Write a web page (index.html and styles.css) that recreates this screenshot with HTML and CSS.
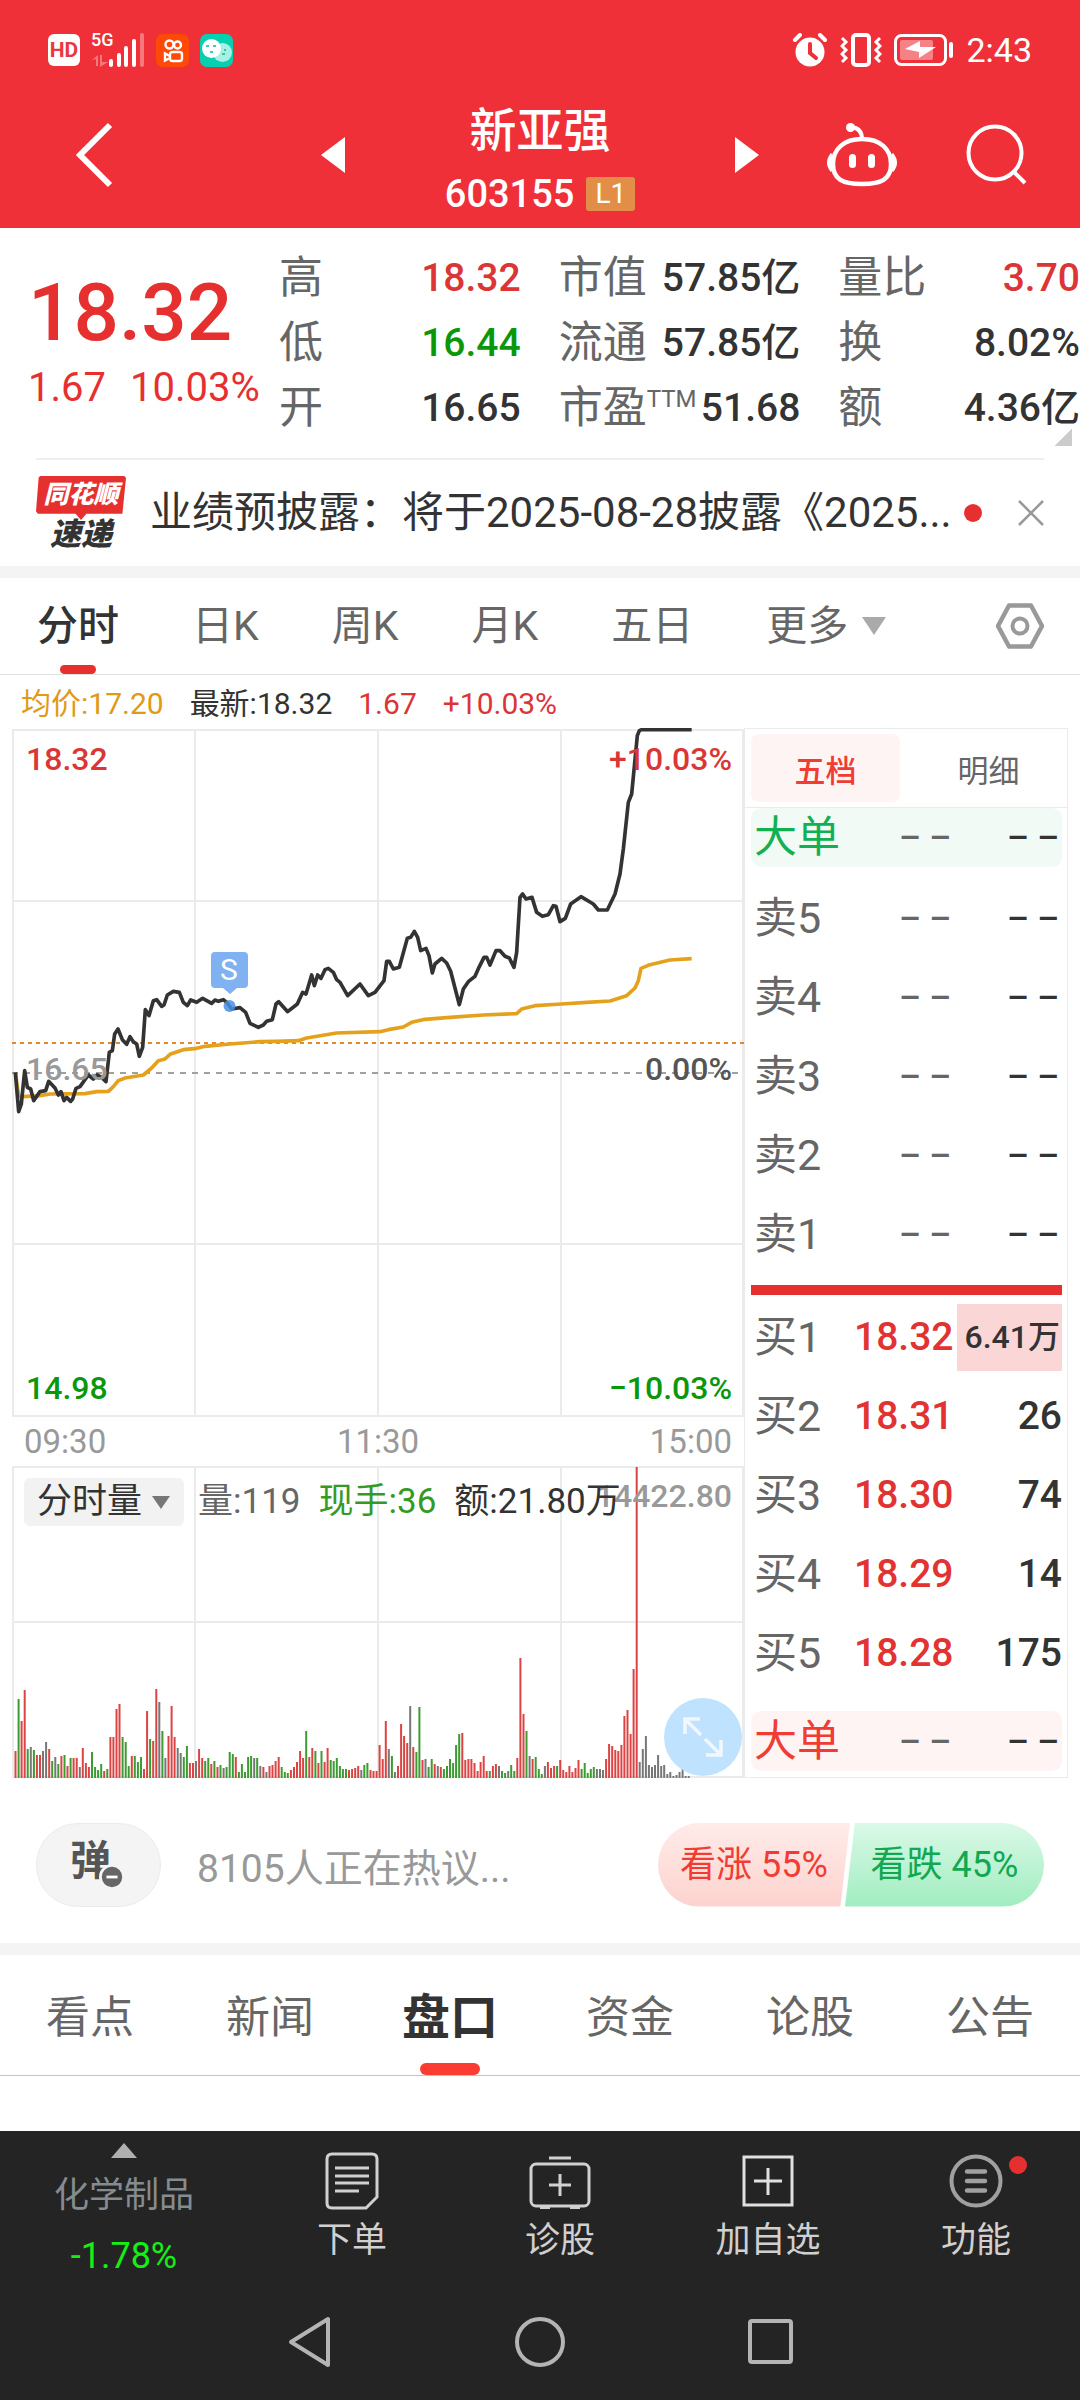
FILE: index.html
```html
<!DOCTYPE html>
<html lang="zh-CN">
<head>
<meta charset="utf-8">
<meta name="viewport" content="width=device-width, initial-scale=1">
<title>新亚强 603155</title>
<link rel="stylesheet" href="styles.css">
</head>
<body>
<header class="top">
  <div class="status">
    <div class="status-left">
      <span class="hd">HD</span>
      <span class="signal">
        <span class="net">5G</span>
        <svg width="54" height="34" viewBox="0 0 54 34"><g stroke="#fff" stroke-width="4" stroke-linecap="round"><path d="M20 28v4M28 22v10M35 15v17M43 8v24"/><path d="M51 2v30" opacity=".35"/></g><path d="M1 27l6-5v11h-2v-7zM9 22h2v7h6l-8 5z" fill="#fff" opacity=".35"/></svg>
      </span>
      <svg width="33" height="33" viewBox="0 0 33 33"><rect width="33" height="33" rx="7" fill="#ff4906"/><g fill="none" stroke="#fff" stroke-width="2.4"><circle cx="13.500" cy="10.500" r="4"/><circle cx="21.500" cy="11" r="3.500"/><rect x="14" y="18" width="12" height="9" rx="2.500"/><path d="M14 22l-5-2.500v7l5-2.500"/></g></svg>
      <svg width="33" height="33" viewBox="0 0 33 33"><rect width="33" height="33" rx="7" fill="#07d0b0"/><circle cx="22.500" cy="18.500" r="9.500" fill="#a8f0e2"/><circle cx="11.500" cy="14.500" r="9.500" fill="#fff"/><path d="M6 12h3M13 12h3M10 18h3M24 16h2M22 20h3" stroke="#07b89c" stroke-width="1.600"/></svg>
    </div>
    <div class="status-right">
      <svg width="36" height="34" viewBox="0 0 36 34"><circle cx="18" cy="19" r="14.500" fill="#fff"/><path d="M3 7l5-5M28 2l5 5" stroke="#fff" stroke-width="4" stroke-linecap="round"/><path d="M18 11v9l6 5" fill="none" stroke="#f03038" stroke-width="4" stroke-linecap="round"/></svg>
      <svg width="42" height="34" viewBox="0 0 42 34"><rect x="13" y="2" width="16" height="30" rx="3" fill="none" stroke="#fff" stroke-width="4"/><path d="M2 5l4 4-4 4 4 4-4 4 4 4-4 4M40 5l-4 4 4 4-4 4 4 4-4 4 4 4" fill="none" stroke="#fff" stroke-width="3"/></svg>
      <svg width="60" height="34" viewBox="0 0 60 34"><rect x="1.500" y="2.500" width="50" height="29" rx="6" fill="none" stroke="#fff" stroke-width="3"/><rect x="6" y="7" width="33" height="20" rx="2" fill="#fff" opacity=".4"/><path d="M11 16l15-8v6h16l-17 11v-6z" fill="#fff"/><path d="M57 11v12" stroke="#fff" stroke-width="4" stroke-linecap="round"/></svg>
      <time>2:43</time>
    </div>
  </div>
  <nav class="bar">
    <div class="bar-side bar-left">
      <button class="plain" aria-label="返回"><svg width="38" height="66" viewBox="0 0 38 66"><path d="M34 3L4 33l30 30" fill="none" stroke="#fff" stroke-width="6"/></svg></button>
      <button class="plain" aria-label="上一个"><svg width="24" height="36" viewBox="0 0 24 36"><path d="M24 0v36L0 18z" fill="#fff"/></svg></button>
    </div>
    <div class="title">
      <h1>新亚强</h1>
      <p><span>603155</span><span class="level">L1</span></p>
    </div>
    <div class="bar-side bar-right">
      <button class="plain" aria-label="下一个"><svg width="24" height="36" viewBox="0 0 24 36"><path d="M0 0v36l24-18z" fill="#fff"/></svg></button>
      <button class="plain" aria-label="助手"><svg width="72" height="66" viewBox="0 0 72 66"><path d="M36 17C54 17 65 27 65 42S56 62 36 62 7 57 7 42 18 17 36 17z" fill="none" stroke="#fff" stroke-width="4.500"/><path d="M6 32q-7 9 0 17M66 32q7 9 0 17" fill="#fff" stroke="#fff" stroke-width="3"/><rect x="23" y="32" width="7" height="14" rx="3.500" fill="#fff"/><rect x="42" y="32" width="7" height="14" rx="3.500" fill="#fff"/><circle cx="24.500" cy="5.500" r="4.500" fill="#fff"/><path d="M25 5q11 1 11 12" fill="none" stroke="#fff" stroke-width="4"/></svg></button>
      <button class="plain" aria-label="搜索"><svg width="62" height="62" viewBox="0 0 62 62"><circle cx="30" cy="29" r="26.500" fill="none" stroke="#fff" stroke-width="4"/><path d="M48 47l12 12" stroke="#fff" stroke-width="4"/></svg></button>
    </div>
  </nav>
</header>

<main>
<section class="quote">
  <div class="now">
    <strong>18.32</strong>
    <p><span>1.67</span><span>10.03%</span></p>
  </div>
  <dl>
    <div><dt>高</dt><dd class="up">18.32</dd></div>
    <div><dt>低</dt><dd class="down">16.44</dd></div>
    <div><dt>开</dt><dd>16.65</dd></div>
  </dl>
  <dl>
    <div><dt>市值</dt><dd>57.85亿</dd></div>
    <div><dt>流通</dt><dd>57.85亿</dd></div>
    <div><dt>市盈<sup>TTM</sup></dt><dd>51.68</dd></div>
  </dl>
  <dl>
    <div><dt>量比</dt><dd class="up">3.70</dd></div>
    <div><dt>换</dt><dd>8.02%</dd></div>
    <div><dt>额</dt><dd>4.36亿</dd></div>
  </dl>
  <i class="corner"></i>
</section>

<section class="news">
  <div class="logo"><b>同花顺</b><em>速递</em></div>
  <a href="#">业绩预披露：将于2025-08-28披露《2025...</a>
  <i class="dot"></i>
  <button class="plain" aria-label="关闭"><svg width="26" height="26" viewBox="0 0 26 26"><path d="M1 1l24 24M25 1L1 25" stroke="#999" stroke-width="2.500"/></svg></button>
</section>

<nav class="periods">
  <button class="on">分时</button>
  <button>日K</button>
  <button>周K</button>
  <button>月K</button>
  <button>五日</button>
  <button class="more">更多<svg width="24" height="20" viewBox="0 0 24 20"><path d="M0 1h24L12 19z" fill="#aaa"/></svg></button>
  <button class="gear" aria-label="设置"><svg width="50" height="46" viewBox="0 0 50 46"><path d="M14 2.500h22L47 23 36 43.500H14L3 23z" fill="none" stroke="#999" stroke-width="4.500" stroke-linejoin="round"/><circle cx="25" cy="23" r="7.500" fill="none" stroke="#999" stroke-width="4"/></svg></button>
</nav>

<p class="info"><span class="avg">均价:17.20</span><span>最新:18.32</span><span class="up">1.67</span><span class="up">+10.03%</span></p>

<section class="market">
  <div class="charts">
    <div class="plot">
      <svg viewBox="0 0 732 690">
        <path d="M1 1v688M183 1v688M366 1v688M549 1v688M731 1v688M0 2h732M0 173h732M0 516h732M0 688h732" stroke="#ebebeb" stroke-width="2"/>
        <path d="M0 345h732" stroke="#a0a0a0" stroke-width="2" stroke-dasharray="6 6"/>
        <path d="M0 315h732" stroke="#e8862c" stroke-width="2" stroke-dasharray="4 4"/>
        <g transform="translate(-12 -9) scale(.33333)" fill="none" stroke-width="11" stroke-linejoin="round">
          <path stroke="#e5a11c" d="M46 1060L56 1130 70 1133 120 1130 150 1125 255 1124 290 1118 325 1117 340 1103 355 1085 375 1077 430 1068 455 1047 475 1025 495 1020 512 1005 550 992 590 988 615 982 690 975 780 968 830 967 895 965 920 957 1010 942 1140 938 1165 932 1210 924 1235 910 1275 901 1350 895 1450 888 1550 884 1565 870 1605 860 1685 855 1760 850 1830 846 1880 830 1905 807 1915 785 1923 748 1950 737 2010 723 2075 719"/>
          <path stroke="#333" d="M46 1060L56 1178 64 1155 74 1055 82 1105 92 1110 101 1145 120 1118 137 1115 146 1087 165 1107 175 1128 183 1118 192 1145 200 1135 212 1147 218 1140 228 1108 240 1103 265 1068 280 1080 291 1068 305 1075 318 1088 328 1000 337 995 344 945 354 930 367 962 380 976 390 953 400 968 410 975 418 1012 428 985 436 872 447 890 460 845 470 842 485 862 492 858 502 828 520 817 538 820 550 850 562 860 572 843 590 850 608 838 635 853 645 843 655 847 670 842 680 850 695 870 720 866 737 880 750 913 775 925 790 918 800 907 817 902 828 855 836 848 863 878 892 855 908 820 918 825 935 768 943 800 953 768 963 778 975 752 985 748 1000 760 1010 782 1020 790 1043 830 1080 795 1105 830 1125 820 1152 785 1160 727 1168 727 1180 750 1198 745 1222 658 1232 655 1243 637 1253 655 1262 695 1278 688 1287 710 1297 762 1305 735 1325 718 1340 732 1352 757 1378 857 1390 810 1405 788 1425 772 1437 745 1452 715 1460 715 1470 738 1488 695 1500 695 1515 712 1528 717 1542 745 1550 700 1560 535 1568 525 1578 540 1596 535 1610 580 1627 592 1645 587 1660 560 1668 562 1680 608 1696 598 1712 555 1743 533 1780 555 1795 573 1822 573 1845 525 1860 465 1870 390 1885 250 1895 225 1912 50 1918 35 1925 32 2075 32"/>
        </g>
        <g fill="#4a90e8"><path d="M203 224h29q4 0 4 4v28q0 4-4 4h-7l-7 6-7-6h-8q-4 0-4-4v-28q0-4 4-4z" fill="#80b1f0"/><circle cx="217.500" cy="278" r="6" opacity=".85"/></g>
        <text x="217" y="252" class="mark">S</text>
      </svg>
      <span class="tag tl up">18.32</span>
      <span class="tag tr up">+10.03%</span>
      <span class="tag ml">16.65</span>
      <span class="tag mr">0.00%</span>
      <span class="tag bl down">14.98</span>
      <span class="tag br down">−10.03%</span>
    </div>
    <div class="times"><span>09:30</span><span>11:30</span><span>15:00</span></div>
    <div class="plot">
      <svg id="volume" viewBox="0 0 732 312">
        <path d="M1 1v310M183 1v310M366 1v310M549 1v310M731 1v310M0 1h732M0 156h732M0 311h732" stroke="#ebebeb" stroke-width="2"/>
      </svg>
      <span class="tag vmax">14422.80</span>
      <div class="vol-head">
        <button>分时量<svg width="18" height="13" viewBox="0 0 18 13"><path d="M0 0h18L9 13z" fill="#777"/></svg></button>
        <span class="grey">量:119</span><span class="hand">现手:36</span><span>额:21.80万</span>
      </div>
      <button class="expand" aria-label="放大"><svg width="42" height="42" viewBox="0 0 42 42"><path d="M3 18V3h15M4 4l15 15M39 24v15H24M38 38L23 23" fill="none" stroke="#f0f7ff" stroke-width="3.500"/></svg></button>
    </div>
  </div>

  <div class="book">
    <div class="book-tabs"><button class="on">五档</button><button>明细</button></div>
    <table>
      <tbody class="sell">
        <tr class="big"><th>大单</th><td>– –</td><td>– –</td></tr>
        <tr><th>卖5</th><td>– –</td><td>– –</td></tr>
        <tr><th>卖4</th><td>– –</td><td>– –</td></tr>
        <tr><th>卖3</th><td>– –</td><td>– –</td></tr>
        <tr><th>卖2</th><td>– –</td><td>– –</td></tr>
        <tr><th>卖1</th><td>– –</td><td>– –</td></tr>
      </tbody>
      <tbody class="buy">
        <tr><th>买1</th><td>18.32</td><td class="flash"><span>6.41万</span></td></tr>
        <tr><th>买2</th><td>18.31</td><td>26</td></tr>
        <tr><th>买3</th><td>18.30</td><td>74</td></tr>
        <tr><th>买4</th><td>18.29</td><td>14</td></tr>
        <tr><th>买5</th><td>18.28</td><td>175</td></tr>
        <tr class="big"><th>大单</th><td>– –</td><td>– –</td></tr>
      </tbody>
    </table>
  </div>
</section>

<section class="talk">
  <button class="danmu" aria-label="弹幕">弹<svg width="26" height="26" viewBox="0 0 28 28"><circle cx="14" cy="14" r="12.500" fill="#666" stroke="#f4f4f4" stroke-width="3"/><path d="M8 14h12" stroke="#fff" stroke-width="3"/></svg></button>
  <span class="hot">8105人正在热议...</span>
  <div class="vote"><button class="rise">看涨 55%</button><button class="fall">看跌 45%</button></div>
</section>

<nav class="sections">
  <a href="#">看点</a><a href="#">新闻</a><a href="#" class="on">盘口</a><a href="#">资金</a><a href="#">论股</a><a href="#">公告</a>
</nav>
</main>

<footer>
  <div class="tools">
    <a href="#" class="sector"><svg width="26" height="15" viewBox="0 0 26 15"><path d="M13 0l13 15H0z" fill="#b0b0b0"/></svg><span>化学制品</span><b>-1.78%</b></a>
    <a href="#"><svg width="54" height="58" viewBox="0 0 54 58"><g fill="none" stroke="#d0d0d0" stroke-width="3"><path d="M7 2h40q5 0 5 5v38L41 56H7q-5 0-5-5V7q0-5 5-5z"/><path d="M10 16h34M10 24h34M10 31h34M10 39h24"/></g></svg><span>下单</span></a>
    <a href="#"><svg width="62" height="58" viewBox="0 0 62 58"><g fill="none" stroke="#d0d0d0" stroke-width="3"><rect x="2" y="12" width="58" height="42" rx="5"/><path d="M20 6h22M31 22v22M20 33h22M11 55.500h10M41 55.500h10"/></g></svg><span>诊股</span></a>
    <a href="#"><svg width="54" height="58" viewBox="0 0 54 58"><g fill="none" stroke="#e0e0e0" stroke-width="3"><rect x="3" y="5" width="48" height="48"/><path d="M27 16v27M13 29h28"/></g></svg><span>加自选</span></a>
    <a href="#"><svg width="54" height="58" viewBox="0 0 54 58"><circle cx="27" cy="29" r="24.500" fill="none" stroke="#a0a0a0" stroke-width="4"/><path d="M18 19.500h18M18 29h18M18 38.500h18" stroke="#a0a0a0" stroke-width="4.500" stroke-linecap="round"/></svg><span>功能</span><i class="badge"></i></a>
  </div>
  <div class="system">
    <button class="plain" aria-label="后退"><svg width="50" height="52" viewBox="0 0 50 52"><path d="M43 3v46L6 26z" fill="none" stroke="#b4b4b4" stroke-width="4" stroke-linejoin="round"/></svg></button>
    <button class="plain" aria-label="主页"><svg width="50" height="52" viewBox="0 0 50 52"><circle cx="25" cy="26" r="23" fill="none" stroke="#b4b4b4" stroke-width="4"/></svg></button>
    <button class="plain" aria-label="最近"><svg width="50" height="52" viewBox="0 0 50 52"><rect x="5" y="5" width="41" height="41" rx="2" fill="none" stroke="#b4b4b4" stroke-width="4"/></svg></button>
  </div>
</footer>
<script src="script.js"></script>
</body>
</html>
```
FILE: styles.css
```css
* { box-sizing: border-box; }
body, h1, p, dl, dd { margin: 0; }
body {
  font-family: Roboto, "Noto Sans CJK SC", sans-serif;
  color: #333;
  background: #fff;
}
button {
  font: inherit;
  color: inherit;
  border: 0;
  padding: 0;
  background: none;
}
.plain { display: block; }
a { color: inherit; text-decoration: none; }
svg { display: block; flex: none; }
.up { color: #dc3535; }
.down { color: #0a970a; }

/* header */
.top { background: #f03038; color: #fff; padding-bottom: 2px; }
.status {
  height: 100px;
  padding: 0 48px;
  display: flex;
  align-items: center;
  justify-content: space-between;
}
.status-left { display: flex; align-items: center; gap: 11px; }
.hd {
  width: 32px;
  height: 32px;
  border-radius: 6px;
  background: #fff;
  color: #e83840;
  font-size: 21px;
  font-weight: 700;
  line-height: 32px;
  text-align: center;
}
.signal { position: relative; }
.net { position: absolute; left: 0; top: -2px; font-size: 18px; line-height: 18px; font-weight: 500; }
.status-right { display: flex; align-items: center; gap: 12px; }
.status-right time { font-size: 34px; line-height: 40px; }
.bar {
  display: grid;
  grid-template-columns: 1fr 390px 1fr;
}
.bar-side { display: flex; align-items: center; justify-content: space-between; height: 110px; }
.bar-left { padding-left: 76px; }
.bar-right { padding-right: 53px; }
.title { text-align: center; }
.title h1 { font-size: 47px; line-height: 62px; font-weight: 500; }
.title p {
  display: flex;
  justify-content: center;
  align-items: center;
  gap: 12px;
  font-size: 38px;
  line-height: 64px;
  font-weight: 500;
}
.level {
  background: #e38e48;
  border-radius: 3px;
  padding: 0 9px;
  font-size: 28px;
  line-height: 34px;
  font-weight: 400;
}

/* quote */
.quote {
  position: relative;
  display: grid;
  grid-template-columns: 241px 1fr 1fr 1fr;
  column-gap: 38px;
  padding: 18px 0 17px;
}
.now { padding: 22px 0 0 28px; color: #e63030; white-space: nowrap; }
.now strong { display: block; font-size: 80px; line-height: 90px; font-weight: 500; }
.now p { display: flex; gap: 24px; font-size: 40px; line-height: 60px; }
.quote dl > div {
  display: flex;
  justify-content: space-between;
  height: 65px;
  line-height: 65px;
  white-space: nowrap;
}
.quote dt { font-size: 44px; color: #666; }
.quote dd { font-size: 39px; font-weight: 500; }
.quote sup { font-size: 24px; line-height: 24px; }
.corner {
  position: absolute;
  right: 8px;
  bottom: 12px;
  width: 18px;
  height: 18px;
  background: linear-gradient(135deg, transparent 50%, #ccc 50%);
}

/* news strip */
.news {
  margin: 0 36px;
  height: 108px;
  border-top: 2px solid #eee;
  display: flex;
  align-items: center;
}
.logo {
  width: 90px;
  margin-right: 24px;
  text-align: center;
  font-style: italic;
  font-weight: 900;
}
.logo b {
  display: block;
  padding-bottom: 6px;
  background: #e63030;
  color: #fff;
  font-size: 25px;
  line-height: 38px;
  clip-path: polygon(5% 0, 98% 0, 100% 4%, 96% 86%, 56% 86%, 50% 100%, 44% 86%, 2% 86%, 0 80%, 3% 3%);
}
.logo em { display: block; font-size: 31px; line-height: 30px; }
.news a { flex: 1; font-size: 42px; line-height: 60px; white-space: nowrap; }
.dot { width: 18px; height: 18px; border-radius: 50%; background: #e63030; margin-right: 36px; }

/* period tabs */
.periods {
  border-top: 12px solid #f4f4f4;
  border-bottom: 1px solid #e2e2e2;
  height: 109px;
  padding: 0 35px 0 37px;
  display: flex;
  gap: 73px;
  font-size: 41px;
  color: #666;
}
.periods button { position: relative; height: 96px; line-height: 96px; }
.periods .on { color: #333; font-weight: 500; }
.periods .on::after {
  content: "";
  position: absolute;
  left: 50%;
  bottom: 0;
  width: 36px;
  height: 9px;
  margin-left: -18px;
  border-radius: 5px;
  background: #e63030;
}
.periods .more { display: flex; align-items: center; gap: 14px; }
.periods .gear { margin-left: auto; display: flex; align-items: center; }

.info {
  display: flex;
  gap: 26px;
  padding: 4px 21px 0;
  height: 53px;
  font-size: 30px;
  line-height: 49px;
}
.avg { color: #e09a18; }

/* charts */
.market {
  display: grid;
  grid-template-columns: 732px 1fr;
  padding: 0 12px;
}
.plot { position: relative; }
.plot > svg { width: 100%; height: auto; }
.mark { font-size: 30px; fill: #fff; text-anchor: middle; }
.tag { position: absolute; font-size: 32px; line-height: 38px; font-weight: 500; }
.tl, .ml, .bl { left: 14px; }
.tr, .mr, .br, .vmax { right: 12px; }
.tl, .tr { top: 12px; }
.ml, .mr { top: 322px; }
.bl, .br { bottom: 11px; }
.ml, .vmax { color: #999; }
.mr { color: #555; }
.vmax { top: 11px; }
.times {
  display: flex;
  justify-content: space-between;
  padding: 0 12px;
  font-size: 33px;
  line-height: 48px;
  color: #999;
}
.vol-head {
  position: absolute;
  left: 12px;
  top: 12px;
  display: flex;
  align-items: center;
  gap: 18px;
  font-size: 35px;
  line-height: 48px;
  white-space: nowrap;
}
.vol-head button {
  display: flex;
  align-items: center;
  gap: 10px;
  padding: 0 14px 0 13px;
  margin-right: -4px;
  border-radius: 6px;
  background: #f2f2f2;
}
.grey { color: #666; }
.hand { color: #359a24; }
.expand {
  position: absolute;
  right: 2px;
  bottom: 2px;
  width: 78px;
  height: 78px;
  border-radius: 50%;
  background: #bfe3ff;
  display: flex;
  align-items: center;
  justify-content: center;
}

/* order book */
.book { border: 1px solid #ebebeb; }
.book-tabs {
  display: grid;
  grid-template-columns: 149px 1fr;
  column-gap: 10px;
  height: 79px;
  padding: 5px 0 5px 6px;
  border-bottom: 1px solid #ebebeb;
  font-size: 31px;
  color: #666;
}
.book-tabs .on { color: #f03c32; font-weight: 500; background: #fef4f3; border-radius: 8px; }
.book table { display: block; padding: 0 5px 4px 6px; }
.book tbody { display: block; }
.book tr {
  display: grid;
  grid-template-columns: 1fr 97px 111px;
  height: 79px;
  line-height: 79px;
}
.book th, .book td { padding: 0; white-space: nowrap; }
.book th { text-align: left; font-weight: 400; font-size: 43px; color: #666; padding-left: 3px; }
.book td { text-align: right; font-size: 39px; font-weight: 500; }
.book td:nth-child(2) { color: #e23232; }
.book .sell td, .book .big td { font-size: 34px; padding-right: 3px; }
.book .sell td:nth-child(2), .book .big td:nth-child(2) { color: #666; padding-right: 0; }
.book .sell .big { height: 59px; line-height: 59px; margin-bottom: 12px; background: #f1faf5; border-radius: 10px; }
.book .sell .big th { color: #12b050; }
.book .buy { margin-top: 11px; border-top: 10px solid #e63030; padding-top: 3px; }
.book .buy .big { height: 60px; line-height: 60px; margin-top: 18px; background: #fef4f3; border-radius: 10px; }
.book .buy .big th { color: #f03c32; }
.book .flash { display: flex; align-items: center; justify-content: flex-end; }
.flash span {
  padding: 0 2px 0 8px;
  background: #fad6d6;
  font-size: 32px;
  line-height: 67px;
}

/* discussion */
.talk {
  display: flex;
  align-items: center;
  height: 165px;
  padding: 8px 36px 0 36px;
}
.danmu {
  position: relative;
  width: 125px;
  height: 84px;
  border: 1px solid #ebebeb;
  border-radius: 42px;
  background: #f4f4f4;
  font-size: 41px;
  line-height: 74px;
  font-weight: 700;
  color: #555;
  text-align: left;
  padding: 0 0 8px 33px;
}
.danmu svg { position: absolute; left: 62px; top: 40px; }
.hot { flex: 1; padding-left: 36px; font-size: 39px; color: #999; }
.vote {
  display: grid;
  grid-template-columns: 192px 194px;
  height: 84px;
  font-size: 36px;
  line-height: 84px;
  border-radius: 42px;
  overflow: hidden;
}
.vote button { white-space: nowrap; }
.rise { background: linear-gradient(#ffebe9, #fdd3ce); color: #f03c32; clip-path: polygon(0 0, 100% 0, 95% 100%, 0 100%); }
.fall { background: linear-gradient(#dbf9e8, #a0edc0); color: #10a850; margin-left: -5px; clip-path: polygon(5% 0, 100% 0, 100% 100%, 0 100%); }

.sections {
  border-top: 12px solid #f4f4f4;
  border-bottom: 1px solid #c4c4c4;
  height: 133px;
  display: grid;
  grid-template-columns: repeat(6, 1fr);
  text-align: center;
  font-size: 44px;
  line-height: 126px;
  color: #666;
}
.sections a { position: relative; height: 120px; }
.sections .on { color: #333; font-size: 48px; font-weight: 700; }
.sections .on::after {
  content: "";
  position: absolute;
  left: 50%;
  bottom: 0;
  width: 60px;
  height: 12px;
  margin-left: -30px;
  border-radius: 6px;
  background: #fa3c32;
}

/* bottom bars */
footer { margin-top: 55px; background: #242424; color: #d0d0d0; }
.tools {
  display: grid;
  grid-template-columns: 248px repeat(4, 1fr);
  height: 154px;
}
.tools a {
  position: relative;
  display: flex;
  flex-direction: column;
  align-items: center;
  padding-top: 21px;
  font-size: 35px;
  line-height: 62px;
}
.tools .sector { padding-top: 12px; line-height: 60px; color: #848c90; }
.tools .sector span { padding-top: 8px; }
.tools .sector b { font-size: 36px; font-weight: 400; color: #14f014; }
.badge {
  position: absolute;
  left: 137px;
  top: 25px;
  width: 18px;
  height: 18px;
  border-radius: 50%;
  background: #e63030;
}
.system {
  display: flex;
  justify-content: center;
  gap: 180px;
  padding: 31px 0 33px;
}
```
FILE: script.js
```js
// One bar per trading minute: colour letter (r up, g down, k flat) and height.
const bars = `r27 g79 r57 r88 g29 k31 g28 r23 r23 k27 k36 r29 g17 k21 g14 r22 g23 r12 g20 r20 r20 k11 r30 r15 r11 g26 g11
g8 g14 r7 g9 r41 r41 r69 r74 g41 g36 g12 r22 g22 g16 g21 r9 r67 g39 r37 r89 k76 g47 k20 r42 r72 r41 k30 k25 g21 g32 r15
r15 k17 r29 r20 g17 g20 r14 g17 r11 g13 k10 g11 g26 g24 r21 g6 g14 g6 g21 g22 k20 g20 k12 r11 k6 r12 r13 r17 r21 g11
g6 g5 r8 r11 r16 r27 r20 g47 r21 r30 g27 r15 g27 r16 r30 g18 g17 g20 g12 g9 g9 r8 r9 r10 r12 k8 g13 g15 r8 r7 r7 r33
r19 r57 k29 g22 k6 r12 r54 r42 r35 k72 r31 g26 g71 r18 k19 g11 g19 r14 k12 r11 g9 g12 g19 g15 g33 g44 r45 r18 r19
r19 r15 r7 r16 r22 r7 g7 r12 r14 k12 g7 g5 k7 g13 g7 r20 r120 r64 g47 k22 r19 g21 g9 g4 k12 r16 r10 r12 g12 r18 r8
r6 r12 r6 r10 r18 g9 g15 g5 g9 g11 k9 k9 k8 r19 r34 r32 r28 r27 r33 r62 r68 r44 r109 r311 k16 k29 k42 k13 k11 k13 k23
k12 k13 k4 k6 k2 k3 k6 k12 k2 k2`.split(/\s+/);
const colors = { r: '#dc4444', g: '#3c9c32', k: '#777' };
const svg = document.getElementById('volume');
for (const key of Object.keys(colors)) {
  let d = '';
  bars.forEach((bar, i) => {
    if (bar[0] === key) d += `M${(3.5 + i * 3.06).toFixed(1)} 312v-${bar.slice(1)}`;
  });
  const path = document.createElementNS('http://www.w3.org/2000/svg', 'path');
  path.setAttribute('d', d);
  path.setAttribute('stroke', colors[key]);
  path.setAttribute('stroke-width', '2');
  svg.appendChild(path);
}
```
